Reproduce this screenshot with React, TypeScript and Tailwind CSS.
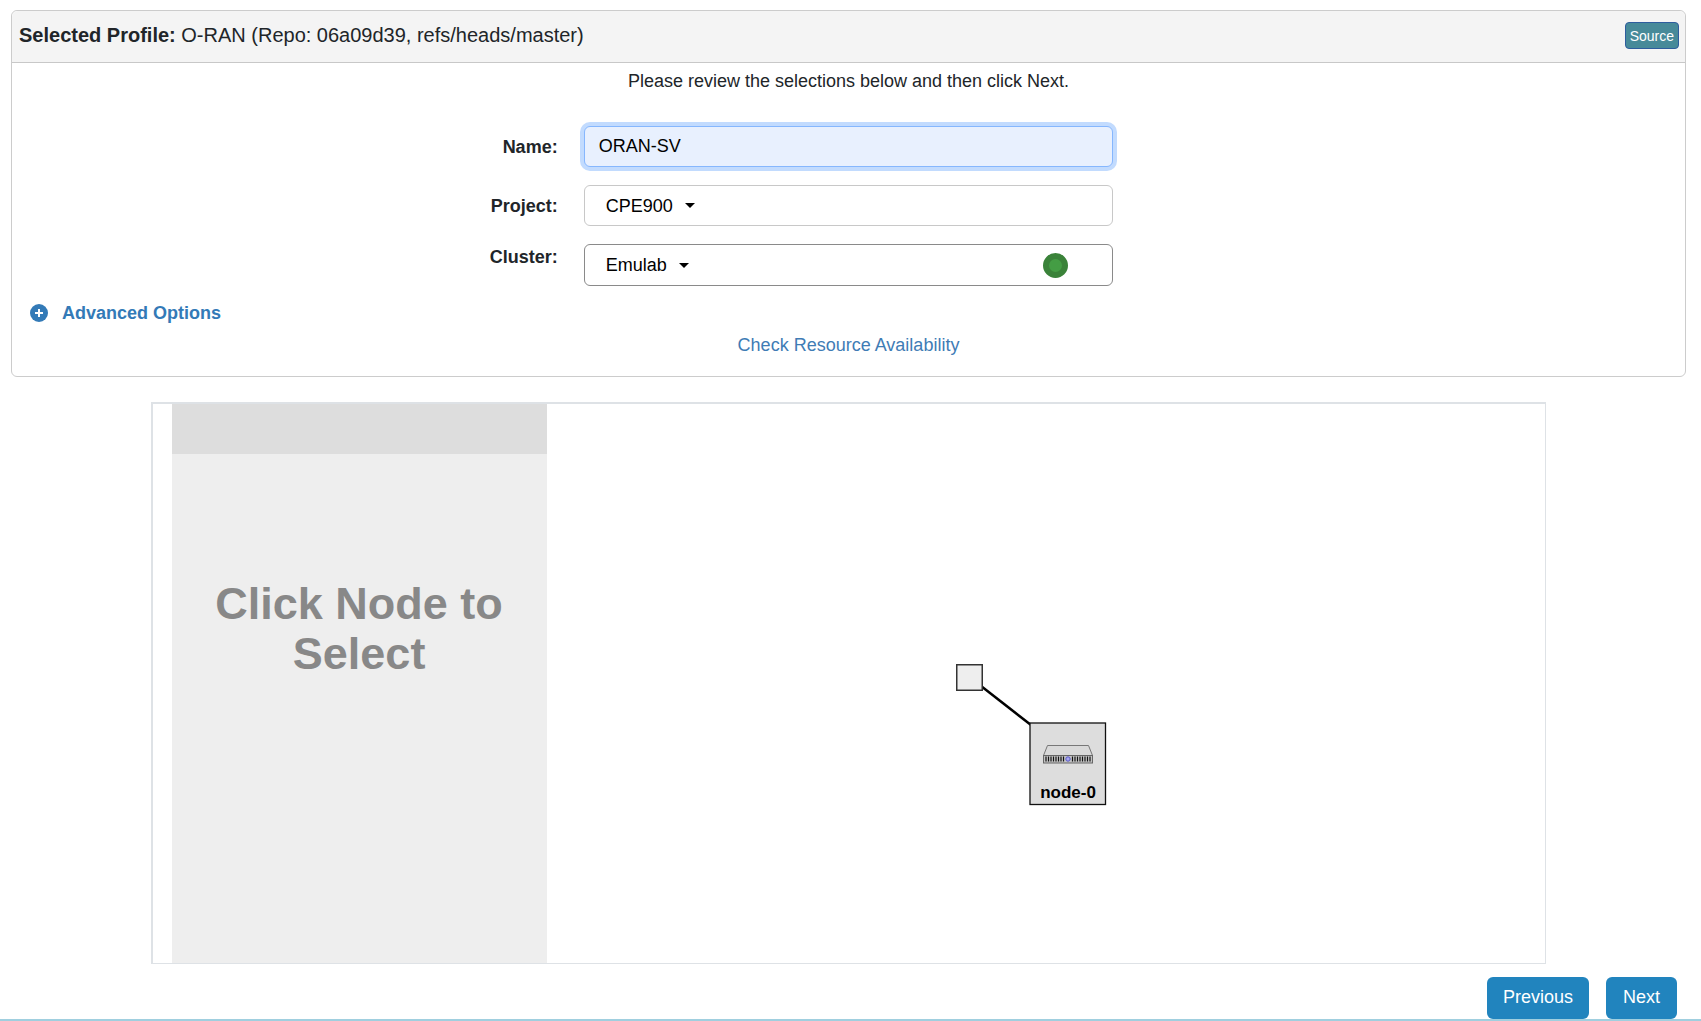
import { useState } from 'react';
import type { ReactNode } from 'react';

function Caret() {
  return (
    <svg className="pointer-events-none -ml-7 h-[5px] w-[10px] shrink-0" viewBox="0 0 10 5" aria-hidden="true">
      <path d="M0 0h10L5 5z" fill="#000" />
    </svg>
  );
}

function Row({ id, label, top, children }: { id: string; label: string; top?: boolean; children: ReactNode }) {
  return (
    <div className="grid grid-cols-3">
      <label
        htmlFor={id}
        className={top ? 'self-start pr-3 text-right font-bold' : 'self-center pr-3 text-right font-bold'}
      >
        {label}
      </label>
      <div className="px-3.5">{children}</div>
    </div>
  );
}

function Topology() {
  const slots = [0, 1, 2, 3, 4, 5, 6, 7];
  return (
    <svg className="absolute top-[259px] left-[408px] h-[144px] w-[154px]" viewBox="0 0 154 144" role="img" aria-label="Network topology">
      <line x1="26" y1="23" x2="76" y2="62" stroke="#000" strokeWidth="2.5" />
      <rect x="1.75" y="1.75" width="25.5" height="25.5" fill="#eeeeee" stroke="#333" strokeWidth="1.5" />
      <rect x="75" y="60" width="75.5" height="81.5" fill="#dddddd" stroke="#111" strokeWidth="1.3" />
      <path d="M92.5 82.500H133.500L137.500 92.500H88.500z" fill="#d9d9d9" stroke="#777" />
      <rect x="88.5" y="92.5" width="49" height="7.5" fill="#c4c4c4" stroke="#666" />
      {slots.map((i) => (
        <g key={i} stroke="#111" strokeWidth="1.2">
          <line x1={91 + i * 2.5} x2={91 + i * 2.5} y1="93.5" y2="98.5" />
          <line x1={117.5 + i * 2.5} x2={117.5 + i * 2.5} y1="93.5" y2="98.5" />
        </g>
      ))}
      <circle cx="113" cy="96" r="2.2" fill="#a9a9ef" stroke="#5656c8" />
      <text x="113" y="135" textAnchor="middle" className="text-[17px] font-bold" fill="#000">
        node-0
      </text>
    </svg>
  );
}

export default function App() {
  const [name, setName] = useState('ORAN-SV');
  return (
    <main className="border-b-2 border-[#a0cfdf] bg-white font-['Liberation_Sans',Arial,sans-serif] text-[18px] leading-[26px] text-[#212529]">
      <div className="pt-[10px] pr-[15px] pl-[11px]">
        <section className="rounded-md border border-[#cccccc]">
          <header className="flex items-start justify-between rounded-t-md border-b border-[#c8c8c8] bg-[#f4f4f4] pt-[11px] pr-[6px] pb-[13px] pl-[7px]">
            <h1 className="text-[20px] leading-[26px]">
              <strong>Selected Profile:</strong> O-RAN (Repo: 06a09d39, refs/heads/master)
            </h1>
            <button className="h-[27px] rounded-[4px] border border-[#2e5d9e] bg-[#478a99] px-1 text-[14px] leading-[24px] text-white">
              Source
            </button>
          </header>
          <p className="pt-[5px] text-center">Please review the selections below and then click Next.</p>
          <div className="flex flex-col gap-[18px] pt-8">
            <Row id="name" label="Name:">
              <input
                id="name"
                value={name}
                onChange={(e) => setName(e.target.value)}
                className="block h-[41px] w-full rounded-md border border-[#86b7fe] bg-[#e8f0fe] px-3.5 text-black ring-4 ring-[#c2dbfe] outline-none"
              />
            </Row>
            <Row id="project" label="Project:">
              <div className="flex h-[41px] items-center rounded-md border border-[#c8c8c8] pl-[21px]">
                <select id="project" className="field-sizing-content h-full appearance-none bg-transparent pr-10 text-black outline-none">
                  <option>CPE900</option>
                </select>
                <Caret />
              </div>
            </Row>
            <Row id="cluster" label="Cluster:" top>
              <div className="flex h-[42px] items-center rounded-md border border-[#8a8a8a] pr-11 pl-[21px]">
                <select id="cluster" className="field-sizing-content h-full appearance-none bg-transparent pr-10 text-black outline-none">
                  <option>Emulab</option>
                </select>
                <Caret />
                <span className="ml-auto size-[25px] rounded-full border-[6px] border-[#3a8239] bg-[#449d44]" />
              </div>
            </Row>
          </div>
          <div className="pt-[14px] pl-[18px]">
            <button className="flex items-center gap-[14px] font-bold text-[#337ab7]">
              <svg className="size-[18px]" viewBox="0 0 18 18" aria-hidden="true">
                <circle cx="9" cy="9" r="9" fill="#337ab7" />
                <path d="M9 5v8M5 9h8" stroke="#fff" strokeWidth="2" />
              </svg>
              Advanced Options
            </button>
          </div>
          <div className="pt-[6px] pb-[18px] text-center">
            <a href="#availability" className="text-[#3f7cb5]">Check Resource Availability</a>
          </div>
        </section>

        <section className="mx-auto mt-[25px] flex w-5/6 border border-t-2 border-l-2 border-[#dee2e6] pl-[19px]">
          <aside className="w-[375px] shrink-0 bg-[#eeeeee] pb-[284px]">
            <div className="h-[50px] bg-[#dddddd]" />
            <h2 className="px-8 pt-[125px] text-center text-[45px] leading-[50px] font-bold text-[#888888]">
              Click Node to Select
            </h2>
          </aside>
          <div className="relative grow">
            <Topology />
          </div>
        </section>
      </div>

      <nav className="flex justify-end gap-[17px] pt-[13px] pr-6">
        <button className="h-[42px] rounded-md bg-[#2184be] px-4 pb-[3px] text-white">Previous</button>
        <button className="h-[42px] rounded-md bg-[#2184be] px-[17px] pb-[3px] text-white">Next</button>
      </nav>
    </main>
  );
}
